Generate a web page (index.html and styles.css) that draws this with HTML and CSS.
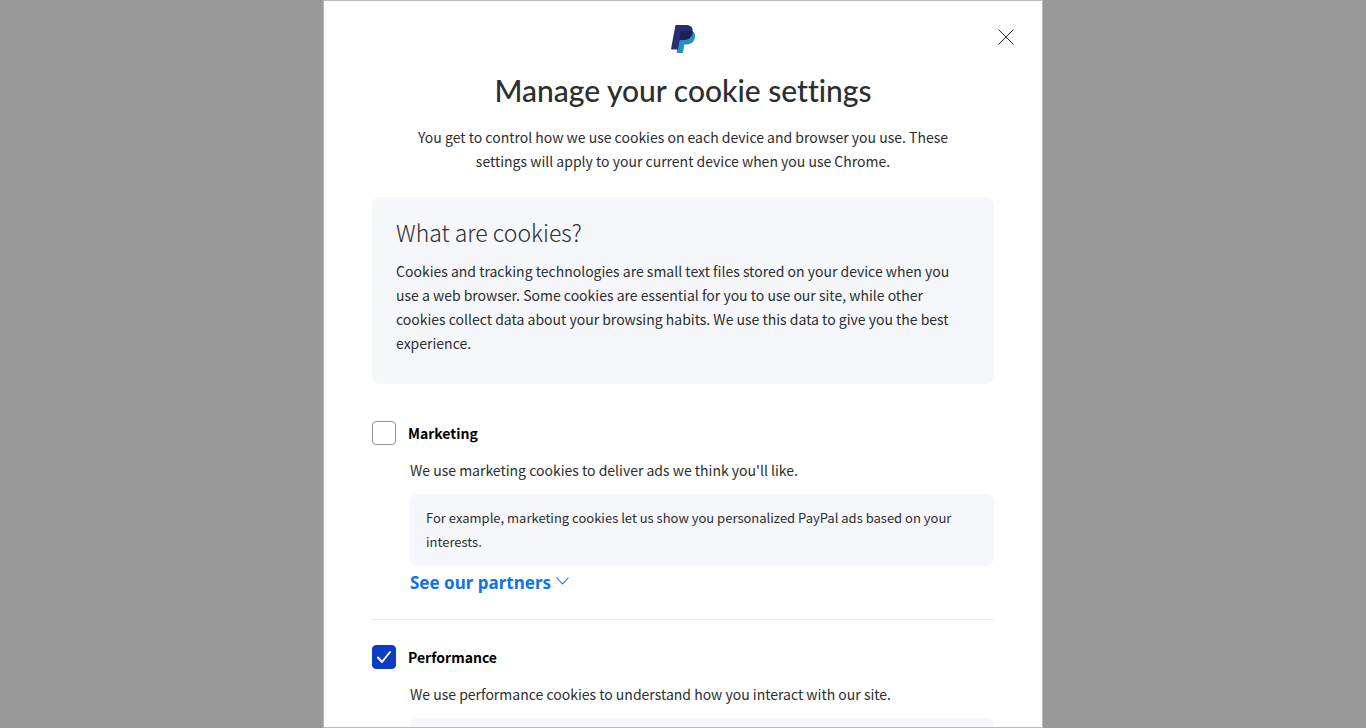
FILE: index.html
```
<!DOCTYPE html>
<html lang="en">
	<head>
		<meta charset="utf-8">
		<meta name="viewport" content="width=device-width, initial-scale=1">
		<title>Manage your cookie settings</title>
		<link rel="stylesheet" href="styles.css">
	</head>
	<body>
		<main class="dialog">
			<button class="close" type="button" aria-label="Close">
				<svg width="16" height="16" viewBox="0 0 16 16" fill="none" stroke="#2c2e2f" stroke-width="1">
					<path d="M.5.5l15 15M15.5.5l-15 15"/>
				</svg>
			</button>
			<header class="header">
				<svg class="logo" width="24" height="28" viewBox="0 0 24 28">
					<path fill="#2790c3" d="M21.6 6.200c2.200 1.400 2.800 3.500 2.300 6.200-.9 4.900-4 7-8.600 7h-1.100c-.6 0-1 .4-1.100 1l-1.100 6.600c-.1.600-.5 1-1.100 1H6.400c-.5 0-.8-.4-.7-.9L8.200 11z"/>
					<path fill="#253073" d="M4.300 1.100C4.400.4 4.900 0 5.600 0h9.200c4.800 0 7.600 2.200 6.800 7.200-.8 5.400-4.200 7.800-9.300 7.800H9.800c-.8 0-1.300.4-1.400 1.200L7 24.500H.9c-.6 0-.9-.4-.8-.9z"/>
					<path fill="#1c2152" d="M9.800 6.800c.1-.6.5-.9 1-.9h6.800c1.600 0 2.900.3 4 .9-.6 5.600-4 8.200-9.300 8.200H9.800c-.6 0-1.100.2-1.300.8z"/>
				</svg>
				<h1 class="title">Manage your cookie settings</h1>
				<p class="intro">You get to control how we use cookies on each device and browser you use. These settings will apply to your current device when you use Chrome.</p>
			</header>
			<section class="about">
				<h2 class="about-title">What are cookies?</h2>
				<p>Cookies and tracking technologies are small text files stored on your device when you use a web browser. Some cookies are essential for you to use our site, while other cookies collect data about your browsing habits. We use this data to give you the best experience.</p>
			</section>
			<section class="category">
				<div class="option">
					<input class="check" type="checkbox" id="marketing">
					<label class="label" for="marketing">Marketing</label>
				</div>
				<div class="details">
					<p>We use marketing cookies to deliver ads we think you'll like.</p>
					<p class="example">For example, marketing cookies let us show you personalized PayPal ads based on your interests.</p>
					<a class="partners" href="#">See our partners
						<svg class="chevron" width="13" height="8" viewBox="0 0 13 8" fill="none" stroke="#0f73ee" stroke-width="1.1">
							<path d="M.5.5l6 6.500 6-6.500"/>
						</svg>
					</a>
				</div>
			</section>
			<section class="category">
				<div class="option">
					<input class="check" type="checkbox" id="performance" checked>
					<label class="label" for="performance">Performance</label>
				</div>
				<div class="details">
					<p>We use performance cookies to understand how you interact with our site.</p>
					<p class="example"></p>
				</div>
			</section>
		</main>
	</body>
</html>
```
FILE: styles.css
```
* {
	margin: 0;
	padding: 0;
	box-sizing: border-box;
}
body {
	background-color: #999;
	color: #2c2e2f;
	font-family: "Noto Sans CJK SC", "Noto Sans", sans-serif;
	font-size: 14px;
	line-height: 24px;
}
.dialog {
	position: relative;
	max-width: 720px;
	height: 100vh;
	margin: 0 auto;
	padding: 24px 48px 0;
	overflow: hidden;
	background-color: #fff;
	border: 1px solid #b7bcbf;
}
.close {
	position: absolute;
	top: 24px;
	right: 24px;
	width: 24px;
	height: 24px;
	display: flex;
	align-items: center;
	justify-content: center;
	background: none;
	border: 0;
	cursor: pointer;
}
.header {
	padding: 0 32px;
	text-align: center;
}
.logo {
	display: block;
	margin: 0 auto 16px;
}
.title {
	margin-bottom: 14px;
	font-family: Lato, sans-serif;
	font-size: 30px;
	font-weight: 500;
	font-variant-ligatures: none;
	line-height: 42px;
}
.about {
	margin-top: 24px;
	padding: 16px 24px 29px;
	background-color: #f5f7fb;
	border-radius: 8px;
}
.about p {
	max-width: 568px;
}
.about-title {
	margin-bottom: 8px;
	font-size: 23px;
	font-weight: 300;
	line-height: 38px;
}
.category {
	padding: 25px 0 24px;
	border-bottom: 1px solid #eaeced;
}
.about + .category {
	margin-top: 12px;
}
.option {
	display: flex;
	align-items: center;
	gap: 12px;
}
.check {
	width: 24px;
	height: 24px;
	appearance: none;
	border: 1px solid #909697;
	border-radius: 4px;
	cursor: pointer;
}
.check:checked {
	border-color: #0c3cc4;
	background: #0c3cc4 url("data:image/svg+xml,%3Csvg xmlns='http://www.w3.org/2000/svg' viewBox='0 0 24 24' fill='none' stroke='white' stroke-width='2' stroke-linecap='round' stroke-linejoin='round'%3E%3Cpath d='M6 12.500l4 4.500 8-10'/%3E%3C/svg%3E") center / 24px no-repeat;
}
.label {
	color: #000;
	font-weight: 700;
}
.details {
	margin-top: 13px;
	padding-left: 38px;
}
.example {
	min-height: 72px;
	margin-top: 12px;
	padding: 12px 16px;
	background-color: #f5f7fb;
	border-radius: 8px;
	font-size: 13px;
}
.partners {
	display: flex;
	align-items: center;
	gap: 5px;
	margin-top: 5px;
	color: #0f73ee;
	font-family: "Noto Sans", sans-serif;
	font-size: 17px;
	font-weight: 700;
	text-decoration: none;
}
.chevron {
	margin-bottom: 4px;
}
```
